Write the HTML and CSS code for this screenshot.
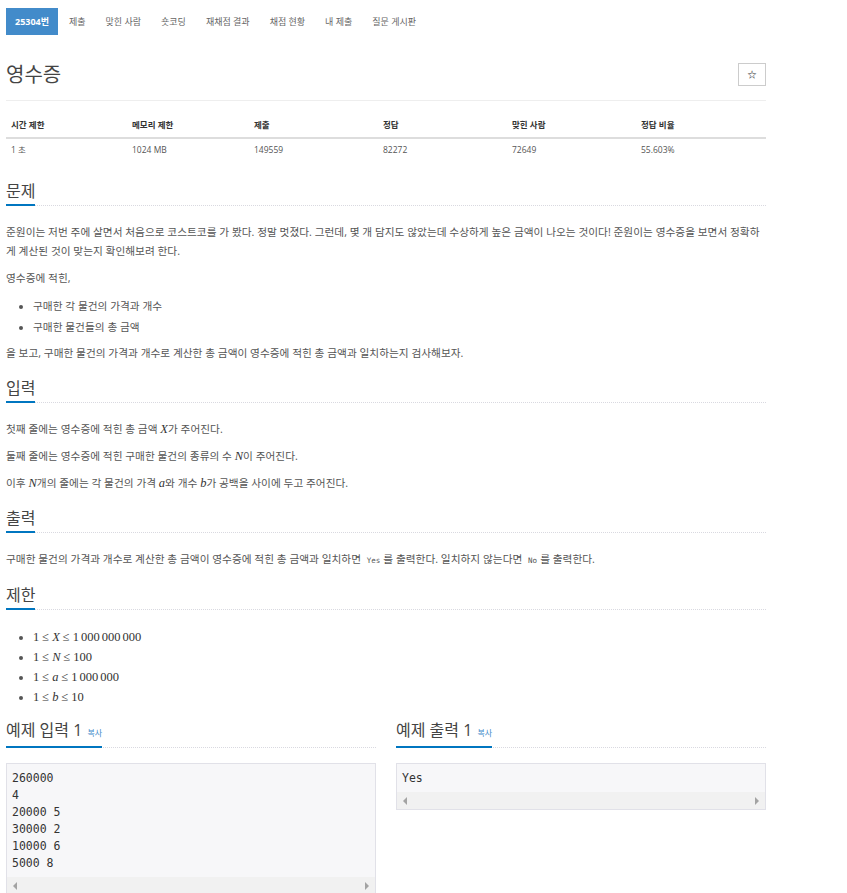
FILE: index.html
```html
<!DOCTYPE html>
<html lang="ko">
<head>
    <meta charset="UTF-8" name="viewport" content="width=device-width, initial-scale=1.0">
    <title>25304번: 영수증</title>
    <link rel="stylesheet" href="styles.css">
</head>
<body>
<div class="wrapper">
    <!-- Problem menu -->
    <ul class="tabs">
        <li class="active"><a href="#">25304번</a></li>
        <li><a href="#">제출</a></li>
        <li><a href="#">맞힌 사람</a></li>
        <li><a href="#">숏코딩</a></li>
        <li><a href="#">재채점 결과</a></li>
        <li><a href="#">채점 현황</a></li>
        <li><a href="#">내 제출</a></li>
        <li><a href="#">질문 게시판</a></li>
    </ul>

    <!-- Title -->
    <div class="page-header">
        <h1>영수증</h1>
        <button class="star-button">&#9734;</button>
    </div>

    <!-- Limits and stats -->
    <table class="problem-info">
        <thead>
        <tr>
            <th>시간 제한</th>
            <th>메모리 제한</th>
            <th>제출</th>
            <th>정답</th>
            <th>맞힌 사람</th>
            <th>정답 비율</th>
        </tr>
        </thead>
        <tbody>
        <tr>
            <td>1 초</td>
            <td>1024 MB</td>
            <td>149559</td>
            <td>82272</td>
            <td>72649</td>
            <td>55.603%</td>
        </tr>
        </tbody>
    </table>

    <!-- Description -->
    <section class="problem-section">
        <div class="headline"><h2>문제</h2></div>
        <div class="problem-text">
            <p>준원이는 저번 주에 살면서 처음으로 코스트코를 가 봤다. 정말 멋졌다. 그런데, 몇 개 담지도 않았는데 수상하게 높은 금액이 나오는 것이다! 준원이는 영수증을 보면서 정확하게 계산된 것이 맞는지 확인해보려 한다.</p>
            <p>영수증에 적힌,</p>
            <ul>
                <li>구매한 각 물건의 가격과 개수</li>
                <li>구매한 물건들의 총 금액</li>
            </ul>
            <p>을 보고, 구매한 물건의 가격과 개수로 계산한 총 금액이 영수증에 적힌 총 금액과 일치하는지 검사해보자.</p>
        </div>
    </section>

    <section class="problem-section">
        <div class="headline"><h2>입력</h2></div>
        <div class="problem-text">
            <p>첫째 줄에는 영수증에 적힌 총 금액 <span class="math"><i>X</i></span>가 주어진다.</p>
            <p>둘째 줄에는 영수증에 적힌 구매한 물건의 종류의 수 <span class="math"><i>N</i></span>이 주어진다.</p>
            <p>이후 <span class="math"><i>N</i></span>개의 줄에는 각 물건의 가격 <span class="math"><i>a</i></span>와 개수 <span class="math"><i>b</i></span>가 공백을 사이에 두고 주어진다.</p>
        </div>
    </section>

    <section class="problem-section">
        <div class="headline"><h2>출력</h2></div>
        <div class="problem-text">
            <p>구매한 물건의 가격과 개수로 계산한 총 금액이 영수증에 적힌 총 금액과 일치하면 <code>Yes</code>를 출력한다. 일치하지 않는다면 <code>No</code>를 출력한다.</p>
        </div>
    </section>

    <section class="problem-section">
        <div class="headline"><h2>제한</h2></div>
        <div class="problem-text">
            <ul class="limits">
                <li><span class="math">1<span class="rel">≤</span><i>X</i><span class="rel">≤</span>1<span class="gap"></span>000<span class="gap"></span>000<span class="gap"></span>000</span></li>
                <li><span class="math">1<span class="rel">≤</span><i>N</i><span class="rel">≤</span>100</span></li>
                <li><span class="math">1<span class="rel">≤</span><i>a</i><span class="rel">≤</span>1<span class="gap"></span>000<span class="gap"></span>000</span></li>
                <li><span class="math">1<span class="rel">≤</span><i>b</i><span class="rel">≤</span>10</span></li>
            </ul>
        </div>
    </section>

    <!-- Samples -->
    <div class="samples">
        <section class="sample">
            <div class="headline"><h2>예제 입력 1 <a class="copy" href="#">복사</a></h2></div>
            <div class="sample-box">
                <pre>260000
4
20000 5
30000 2
10000 6
5000 8</pre>
                <div class="scrollbar"><span class="arrow-left"></span><span class="arrow-right"></span></div>
            </div>
        </section>
        <section class="sample">
            <div class="headline"><h2>예제 출력 1 <a class="copy" href="#">복사</a></h2></div>
            <div class="sample-box">
                <pre>Yes</pre>
                <div class="scrollbar"><span class="arrow-left"></span><span class="arrow-right"></span></div>
            </div>
        </section>
    </div>
</div>
</body>
</html>
```

FILE: styles.css
```css
* {
    box-sizing: border-box;
}

body {
    margin: 0;
    padding: 8px 0 0 6px;
    background: #ffffff;
    color: #555555;
    font-family: "Open Sans", "Noto Sans CJK KR", sans-serif;
    font-size: 10.7px;
}

.wrapper {
    width: 760px;
}

/* Menu tabs */
.tabs {
    display: flex;
    list-style: none;
    margin: 0;
    padding: 0;
}

.tabs a {
    display: block;
    height: 27px;
    line-height: 27px;
    padding: 0 10px;
    font-size: 9px;
    color: #666666;
    text-decoration: none;
}

.tabs .active a {
    background-color: #428bca;
    color: #ffffff;
    font-weight: bold;
    padding: 0 9px;
    margin-right: 1px;
}

/* Title */
.page-header {
    display: flex;
    justify-content: space-between;
    align-items: flex-start;
    margin-top: 28px;
    padding-bottom: 13px;
    border-bottom: 1px solid #eeeeee;
}

.page-header h1 {
    margin: 0;
    font-size: 20px;
    line-height: 24px;
    font-weight: normal;
    color: #444444;
}

.star-button {
    width: 28px;
    height: 23px;
    padding: 0;
    border: 1px solid #cccccc;
    background: #ffffff;
    color: #333333;
    font-size: 10px;
    cursor: pointer;
}

/* Info table */
.problem-info {
    width: 100%;
    margin-top: 11px;
    margin-bottom: 21px;
    border-collapse: collapse;
    font-size: 8.5px;
}

.problem-info th,
.problem-info td {
    text-align: left;
    padding: 6px 5px;
    line-height: 13px;
}

.problem-info th {
    border-bottom: 2px solid #dddddd;
    color: #333333;
}

.problem-info td {
    padding: 4px 5px;
}

.problem-info th:nth-child(1) { width: 121px; }
.problem-info th:nth-child(2) { width: 122px; }
.problem-info th:nth-child(3) { width: 129px; }
.problem-info th:nth-child(4) { width: 129px; }
.problem-info th:nth-child(5) { width: 129px; }

/* Sections */
.problem-section {
    margin-top: 15px;
}

.headline {
    border-bottom: 1px dotted #d9d9e0;
}

.headline h2 {
    display: inline-block;
    margin: 0 0 -1px;
    padding-bottom: 3px;
    border-bottom: 2px solid #0076c0;
    font-size: 16px;
    line-height: 20px;
    font-weight: normal;
    color: #444444;
}

.problem-text {
    padding-top: 17px;
    line-height: 19px;
}

.problem-text p {
    margin: 0 0 8px;
}

.problem-text p:last-child {
    margin-bottom: 0;
}

.problem-text ul {
    margin: 0 0 6px;
    padding-left: 27px;
}

.problem-text li {
    line-height: 21px;
}

.math {
    font-family: "Liberation Serif", "DejaVu Serif", serif;
    font-size: 12.5px;
    color: #333333;
}

.math i {
    font-style: italic;
}

.rel {
    margin: 0 3px;
}

.gap {
    display: inline-block;
    width: 2px;
}

.limits li {
    line-height: 20px;
}

code {
    font-family: "DejaVu Sans Mono", monospace;
    font-size: 7.5px;
    padding: 0 3px;
    color: #555555;
}

/* Samples */
.samples {
    display: grid;
    grid-template-columns: 1fr 1fr;
    gap: 20px;
    margin-top: 13px;
}

.copy {
    font-size: 8px;
    color: #428bca;
    text-decoration: none;
    margin-left: 1px;
}

.sample-box {
    margin-top: 15px;
    border: 1px solid #e1e1e8;
    background-color: #f7f7f9;
}

.sample-box pre {
    margin: 0;
    padding: 6px 5px 5px;
    font-family: "DejaVu Sans Mono", monospace;
    font-size: 11.5px;
    line-height: 17px;
    color: #333333;
}

.scrollbar {
    display: flex;
    justify-content: space-between;
    align-items: center;
    height: 17px;
    padding: 0 6px;
    background-color: #f1f1f1;
}

.arrow-left,
.arrow-right {
    width: 0;
    height: 0;
    border-top: 4px solid transparent;
    border-bottom: 4px solid transparent;
}

.arrow-left {
    border-right: 4px solid #a3a3a3;
}

.arrow-right {
    border-left: 4px solid #a3a3a3;
}
```
